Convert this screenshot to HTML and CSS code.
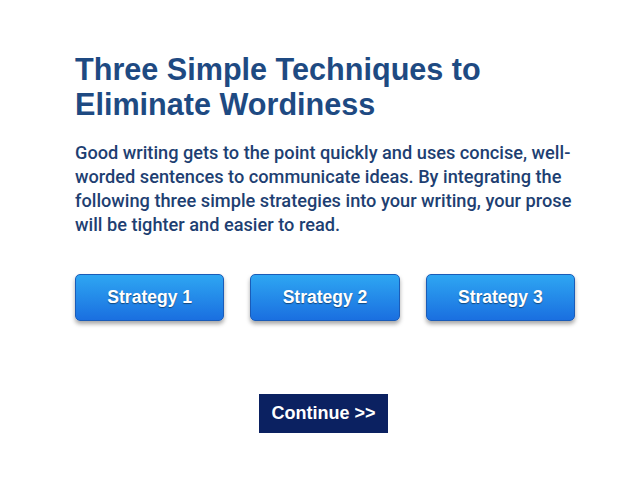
FILE: index.html
```html
<!DOCTYPE html>
<html>
<head>
<meta charset="utf-8">
<link rel="stylesheet" href="styles.css">
</head>
<body>
<main class="page">
  <h1 class="title">Three Simple Techniques to Eliminate Wordiness</h1>
  <p class="intro">Good writing gets to the point quickly and uses concise, well-worded sentences to communicate ideas. By integrating the following three simple strategies into your writing, your prose will be tighter and easier to read.</p>
  <div class="strategies">
    <button class="strategy">Strategy 1</button>
    <button class="strategy">Strategy 2</button>
    <button class="strategy">Strategy 3</button>
  </div>
  <div class="actions">
    <button class="continue">Continue &gt;&gt;</button>
  </div>
</main>
</body>
</html>
```

FILE: styles.css
```css
html, body {
  margin: 0;
  padding: 0;
  background: #ffffff;
}
.page {
  width: 500px;
  padding: 52px 0 0 75px;
  font-family: "Liberation Sans", Arial, sans-serif;
}
.title {
  margin: 0;
  width: 420px;
  font-size: 30.6px;
  line-height: 35px;
  font-weight: bold;
  color: #1e4a82;
}
.intro {
  margin: 19px 0 0 0;
  width: 510px;
  font-family: Roboto, "Liberation Sans", sans-serif;
  font-weight: 500;
  font-size: 18.2px;
  line-height: 24px;
  color: #1e3f72;
}
.strategies {
  display: flex;
  gap: 26px;
  margin-top: 37px;
}
.strategy {
  width: 150px;
  height: 47px;
  border: 1px solid #1a5cb8;
  border-radius: 5px;
  background: linear-gradient(#2ea6f2, #1a6fe0);
  box-shadow: 0 3px 4px rgba(0,0,0,0.35);
  color: #ffffff;
  font-family: "Liberation Sans", Arial, sans-serif;
  font-weight: bold;
  font-size: 17.5px;
  text-shadow: 0 1px 1px rgba(0,0,0,0.45);
  padding: 0;
}
.actions {
  display: flex;
  justify-content: center;
  margin-top: 73px;
  width: 500px;
}
.continue {
  width: 129px;
  height: 39px;
  border: none;
  background: #0b2161;
  color: #ffffff;
  font-family: "Liberation Sans", Arial, sans-serif;
  font-weight: bold;
  font-size: 18px;
  padding: 0;
  margin-left: -3px;
}
```
